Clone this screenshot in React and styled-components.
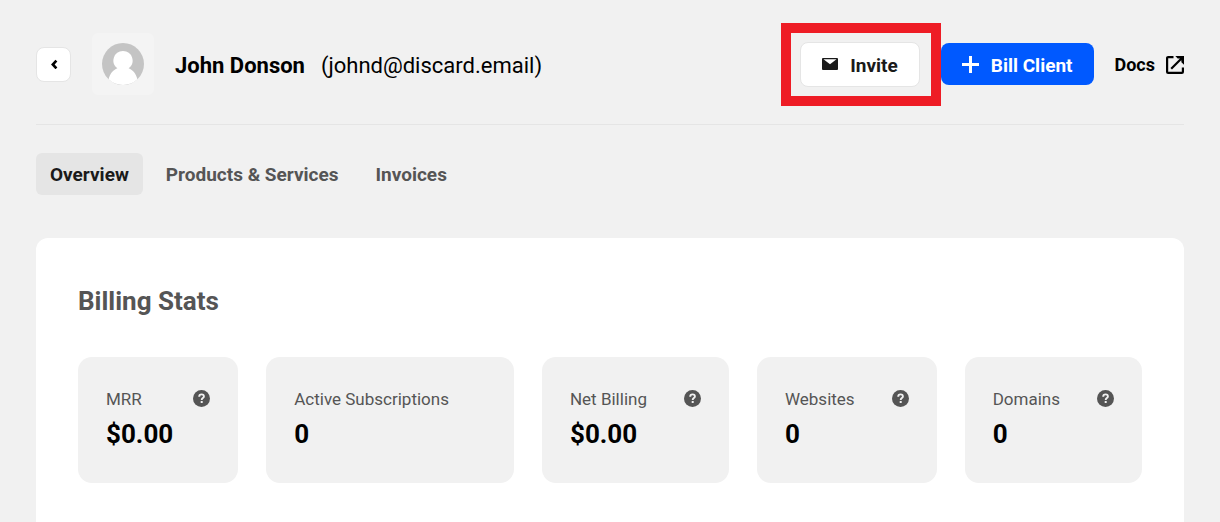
import React from 'react'
import styled, { createGlobalStyle } from 'styled-components'

const GlobalStyle = createGlobalStyle`
  * {
    box-sizing: border-box;
  }

  body {
    margin: 0;
    background: #f1f1f1;
    color: #000;
    font-family: Roboto, 'Liberation Sans', sans-serif;
  }

  button {
    font-family: inherit;
    cursor: pointer;
  }
`

const Page = styled.div`
  padding: 22px 36px 0;
`

const Header = styled.header`
  display: flex;
  align-items: center;
  justify-content: space-between;
  height: 103px;
  padding-bottom: 18px;
  border-bottom: 1px solid #e5e5e5;
`

const Client = styled.div`
  display: flex;
  align-items: center;
`

const BackButton = styled.button`
  display: flex;
  align-items: center;
  justify-content: center;
  width: 35px;
  height: 35px;
  padding: 0;
  background: #fff;
  border: 1px solid #e5e5e5;
  border-radius: 8px;
`

const Avatar = styled.div`
  display: flex;
  align-items: center;
  justify-content: center;
  width: 62px;
  height: 62px;
  margin: 0 21px;
  background: #f4f4f4;
  border-radius: 6px;
`

const Name = styled.h1`
  margin: 0 16px 0 0;
  padding-top: 3px;
  font-size: 22px;
  line-height: 28px;
  font-weight: 700;
`

const Email = styled.span`
  padding-top: 3px;
  font-size: 22px;
  line-height: 28px;
`

const Actions = styled.div`
  display: flex;
  align-items: center;
`

const Highlight = styled.div`
  border: 10px solid #ee1c25;
  padding: 9px 11px 9px 9px;
`

const Button = styled.button`
  display: flex;
  align-items: center;
  gap: 12px;
  height: ${props => props.$primary ? '42px' : '45px'};
  padding: 2px 21px 0;
  color: ${props => props.$primary ? '#fff' : '#1a1a1a'};
  background: ${props => props.$primary ? '#0059ff' : '#fff'};
  border: ${props => props.$primary ? 'none' : '1px solid #e5e5e5'};
  border-radius: 8px;
  font-size: 19px;
  font-weight: 700;

  svg {
    margin-bottom: 2px;
  }
`

const DocsLink = styled.a`
  display: flex;
  align-items: center;
  gap: 11px;
  margin-left: 21px;
  padding-top: 2px;
  color: #000;
  font-size: 18px;
  line-height: 24px;
  font-weight: 700;
  text-decoration: none;
`

const Tabs = styled.nav`
  display: flex;
  gap: 9px;
  margin: 28px 0 43px;
`

const Tab = styled.a`
  padding: 2px 14px 0;
  color: ${props => props.$active ? '#1a1a1a' : '#555'};
  background: ${props => props.$active ? '#e5e5e5' : 'transparent'};
  border-radius: 6px;
  font-size: 19px;
  line-height: 40px;
  font-weight: 700;
  text-decoration: none;
`

const Panel = styled.section`
  padding: 46px 42px 54px;
  background: #fff;
  border-radius: 12px;
`

const PanelTitle = styled.h2`
  margin: 0 0 38px;
  color: #555;
  font-size: 26px;
  line-height: 35px;
  font-weight: 700;
`

const Stats = styled.div`
  display: flex;
  gap: 28px;
`

const Stat = styled.div`
  flex: 1 1 auto;
  height: 126px;
  padding: 28px;
  background: #f1f1f1;
  border-radius: 14px;
`

const StatTop = styled.div`
  display: flex;
  align-items: center;
  justify-content: space-between;
`

const StatLabel = styled.span`
  color: #555;
  font-size: 17px;
  line-height: 28px;
`

const HelpButton = styled.button`
  display: flex;
  padding: 0 0 2px;
  background: none;
  border: none;
`

const StatValue = styled.div`
  margin-top: 4px;
  font-size: 26px;
  line-height: 35px;
  font-weight: 700;
`


const BackIcon = () => (
  <svg width="8" height="10" viewBox="0 0 8 10" fill="none" stroke="#000" strokeWidth="2.6">
    <path d="M6.4 1.6L2.8 5.5l3.6 3.9" />
  </svg>
)

const AvatarIcon = () => (
  <svg width="42" height="42" viewBox="0 0 42 42">
    <circle cx="21" cy="21" r="21" fill="#c4c4c4" />
    <path
      fill="#fff"
      d="M21 8a9.5 9.5 0 0 1 5.6 17.2C31 27 34 30.5 35.4 36.2A21 21 0 0 1 6.6 36.2C8 30.5 11 27 15.4 25.2A9.5 9.5 0 0 1 21 8z"
    />
  </svg>
)

const MailIcon = () => (
  <svg width="16" height="12" viewBox="0 0 16 12">
    <rect width="16" height="12" rx="1" fill="#1a1a1a" />
    <path d="M1.5 1.2h13L8 6.2z" fill="#fff" />
  </svg>
)

const PlusIcon = () => (
  <svg width="17" height="17" viewBox="0 0 17 17" fill="#fff">
    <path d="M7 0h3v7h7v3h-7v7H7v-7H0V7h7z" />
  </svg>
)

const ExternalIcon = () => (
  <svg width="18" height="18" viewBox="0 0 18 18" fill="none" stroke="#000" strokeWidth="2.2">
    <path d="M7.5 1.1H2.1a1 1 0 0 0-1 1v13.8a1 1 0 0 0 1 1h13.8a1 1 0 0 0 1-1V11.5" />
    <path d="M5.2 12.8L15.5 2.5" />
    <path d="M9.3 0H18v8.7l-2.6-2.5V4.4l-1.8-1.8h-1.9z" fill="#000" stroke="none" />
  </svg>
)

const HelpIcon = () => (
  <svg width="17" height="17" viewBox="0 0 17 17">
    <circle cx="8.5" cy="8.5" r="8.5" fill="#555" />
    <path d="M6.2 6.7c0-1.5 1-2.3 2.4-2.3s2.3.8 2.3 2c0 1.7-2.2 1.7-2.2 3.5" fill="none" stroke="#f1f1f1" strokeWidth="1.9" />
    <rect x="7.7" y="11" width="2" height="2" fill="#f1f1f1" />
  </svg>
)


const tabs = ['Overview', 'Products & Services', 'Invoices']

const stats = [
  { label: 'MRR', value: '$0.00', help: true },
  { label: 'Active Subscriptions', value: '0' },
  { label: 'Net Billing', value: '$0.00', help: true },
  { label: 'Websites', value: '0', help: true },
  { label: 'Domains', value: '0', help: true },
]

const App = () => (
  <Page>
    <GlobalStyle />

    <Header>
      <Client>
        <BackButton aria-label="Back"><BackIcon /></BackButton>
        <Avatar><AvatarIcon /></Avatar>
        <Name>John Donson</Name>
        <Email>(johnd@discard.email)</Email>
      </Client>

      <Actions>
        <Highlight>
          <Button><MailIcon /> Invite</Button>
        </Highlight>
        <Button $primary><PlusIcon /> Bill Client</Button>
        <DocsLink href="#docs">Docs <ExternalIcon /></DocsLink>
      </Actions>
    </Header>

    <Tabs>
      {tabs.map((tab, i) => (
        <Tab key={tab} href="#" $active={i === 0}>{tab}</Tab>
      ))}
    </Tabs>

    <Panel>
      <PanelTitle>Billing Stats</PanelTitle>
      <Stats>
        {stats.map(stat => (
          <Stat key={stat.label}>
            <StatTop>
              <StatLabel>{stat.label}</StatLabel>
              {stat.help && (
                <HelpButton aria-label={`About ${stat.label}`}><HelpIcon /></HelpButton>
              )}
            </StatTop>
            <StatValue>{stat.value}</StatValue>
          </Stat>
        ))}
      </Stats>
    </Panel>
  </Page>
)

export default App
